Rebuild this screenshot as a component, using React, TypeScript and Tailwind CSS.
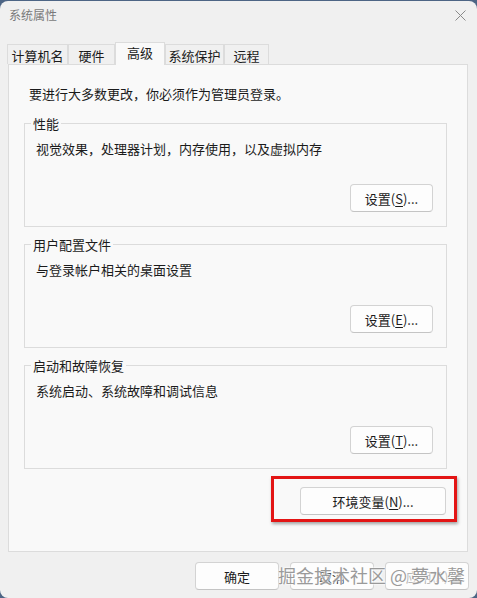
import React from "react";

const font = "font-['Noto_Sans_CJK_SC','Noto_Sans',sans-serif]";

const Btn: React.FC<{ label: string; hot?: string; tail?: string; className?: string }> = ({
  label,
  hot,
  tail,
  className = "",
}) => (
  <div
    className={`flex h-[28px] items-center justify-center rounded-[4px] border border-[#d3d3d3] border-b-[#c4c4c4] bg-[#fdfdfd] text-[13px] leading-none text-[#1b1b1b] ${className}`}
  >
    {label}
    {hot && (
      <>
        (<span className="underline underline-offset-2">{hot}</span>){tail}
      </>
    )}
  </div>
);

const Group: React.FC<{ title: string; desc: string; btn: string; hot: string; className?: string }> = ({
  title,
  desc,
  btn,
  hot,
  className = "",
}) => (
  <fieldset className={`mx-[15px] mr-[20px] h-[112px] border border-[#dcdcdc] ${className}`}>
    <legend className="ml-[6px] px-[2px] text-[13px] leading-[17px] text-[#1b1b1b]">{title}</legend>
    <div className="mt-[8px] pl-[11px] text-[13px] leading-[18px] text-[#1b1b1b]">{desc}</div>
    <div className="mt-[26px] flex justify-end pr-[13px]">
      <Btn label={btn} hot={hot} tail="..." className="w-[83px]" />
    </div>
  </fieldset>
);

const tabs = [
  { name: "计算机名", w: "w-[61px]" },
  { name: "硬件", w: "w-[47px]" },
  { name: "高级", w: "w-[50px]", active: true },
  { name: "系统保护", w: "w-[59px]" },
  { name: "远程", w: "w-[45px]" },
];

const App: React.FC = () => {
  return (
    <div className={`h-[598px] w-[477px] overflow-hidden bg-[#4d6585] ${font}`}>
      <div className="relative mt-[1px] flex h-[597px] flex-col rounded-[8px] bg-[#f0f0f0]">
        {/* Title bar */}
        <div className="flex h-[42px] items-start justify-between pl-[9px] pr-[10px] pt-[6px]">
          <span className="text-[12px] leading-[16px] text-[#7a7a7a]">系统属性</span>
          <svg width="11" height="11" viewBox="0 0 11 11" className="mr-[1px] mt-[3px]">
            <path d="M0.5 0.5L10.5 10.5M10.5 0.5L0.5 10.5" stroke="#8a8a8a" strokeWidth="1" />
          </svg>
        </div>

        {/* Tabs */}
        <div className="flex h-[21px] items-end pl-[7px]">
          {tabs.map((t) =>
            t.active ? (
              <div
                key={t.name}
                className={`relative z-10 -mb-[1px] flex h-[23px] items-start justify-center border border-b-0 border-[#dcdcdc] bg-[#f9f9f9] pt-[2px] text-[13px] leading-[16px] text-[#1b1b1b] ${t.w}`}
              >
                {t.name}
              </div>
            ) : (
              <div
                key={t.name}
                className={`flex h-[20px] items-center justify-center border border-b-0 border-[#dcdcdc] bg-[#f0f0f0] pt-[2px] text-[13px] leading-[16px] text-[#1b1b1b] ${t.w}`}
              >
                {t.name}
              </div>
            )
          )}
        </div>

        {/* Panel */}
        <div className="mx-[8px] mr-[9px] flex flex-col border border-[#dcdcdc] bg-[#f9f9f9] pb-[36px] pt-[20px]">
          <div className="pl-[20px] text-[13px] leading-[18px] text-[#1b1b1b]">
            要进行大多数更改，你必须作为管理员登录。
          </div>
          <Group className="mt-[12px]" title="性能" desc="视觉效果，处理器计划，内存使用，以及虚拟内存" btn="设置" hot="S" />
          <Group className="mt-[9px]" title="用户配置文件" desc="与登录帐户相关的桌面设置" btn="设置" hot="E" />
          <Group className="mt-[9px]" title="启动和故障恢复" desc="系统启动、系统故障和调试信息" btn="设置" hot="T" />
          <div className="mt-[18px] flex justify-end pr-[21px]">
            <div className="-mb-[7px] -ml-[29px] -mr-[11px] -mt-[11px] border-[3px] border-[#e31515] pb-[4px] pl-[26px] pr-[8px] pt-[8px] shadow-[1px_2px_3px_rgba(0,0,0,0.35)]">
              <Btn label="环境变量" hot="N" tail="..." className="w-[146px]" />
            </div>
          </div>
        </div>

        {/* Dialog buttons */}
        <div className="mt-[10px] flex justify-end gap-[11px] pr-[8px]">
          <Btn label="确定" className="w-[84px]" />
          <Btn label="取消" className="w-[84px]" />
          <Btn label="应用(A)" className="w-[84px] text-[#b5b5b5]" />
        </div>

        {/* Watermark */}
        <div className="absolute left-[278px] top-[562px] whitespace-nowrap text-[18px] leading-[24px] text-[#9a9a9a] [text-shadow:0_0_2px_#fff,0_0_2px_#fff,0_0_3px_#fff]">
          掘金技术社区 @ 夢水馨
        </div>
      </div>
    </div>
  );
};

export default App;
